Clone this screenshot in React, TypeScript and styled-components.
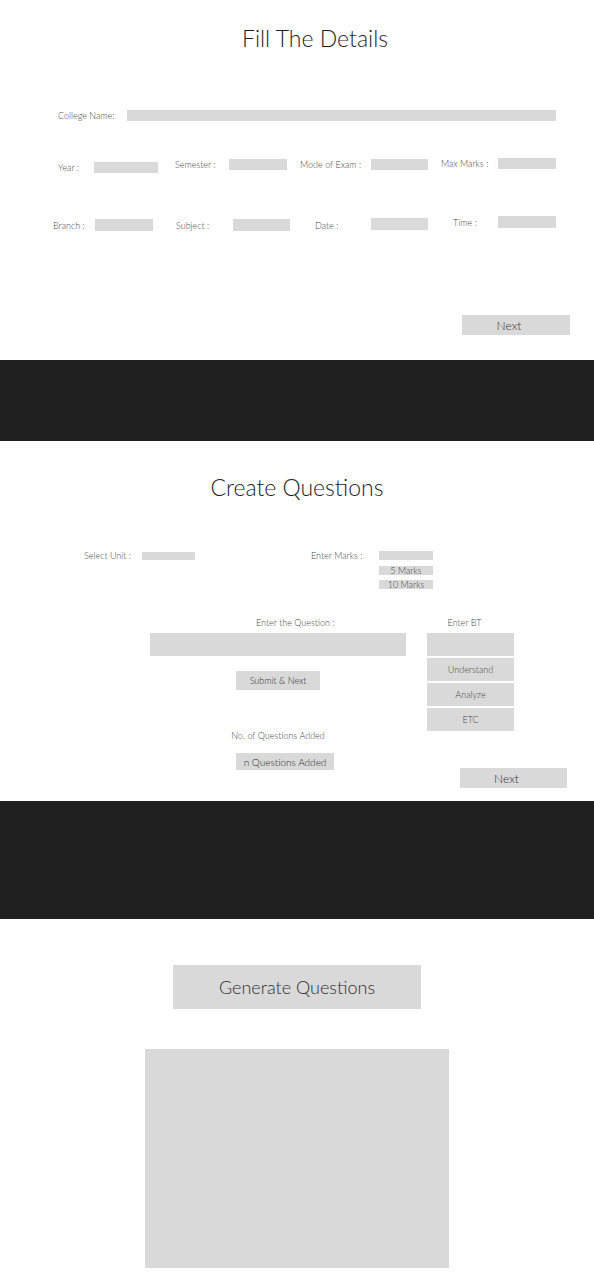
import styled, { createGlobalStyle } from "styled-components"

const Global = createGlobalStyle`
    body {
        margin: 0;
        background: #ffffff;
        font-family: Lato, "Open Sans", sans-serif;
        font-weight: 300;
        color: #444;
    }
`

const Page = styled.div`
    width: 594px;
    display: flex;
    flex-direction: column;
`

const Section = styled.section<{ $h: number; $pt: number }>`
    height: ${p => p.$h}px;
    padding-top: ${p => p.$pt}px;
    box-sizing: border-box;
    display: flex;
    flex-direction: column;
`

const Band = styled.div<{ $h: number }>`
    height: ${p => p.$h}px;
    background: #1f1f1f;
`

const Title = styled.h1<{ $shift?: number }>`
    margin: 0;
    font-size: 23px;
    line-height: 26px;
    font-weight: 300;
    color: #1e1e1e;
    text-align: center;
    padding-left: ${p => p.$shift ?? 0}px;
`

const Row = styled.div<{ $mt: number; $pl: number; $cols?: string }>`
    margin-top: ${p => p.$mt}px;
    padding-left: ${p => p.$pl}px;
    display: grid;
    grid-template-columns: ${p => p.$cols ?? "auto"};
    align-items: start;
`

const Field = styled.div<{ $lw: number; $dy?: number }>`
    display: grid;
    grid-template-columns: ${p => p.$lw}px auto;
    align-items: center;
    margin-top: ${p => p.$dy ?? 0}px;
`

const Label = styled.span<{ $ly?: number }>`
    font-size: 9px;
    line-height: 11px;
    color: #4a4a4a;
    white-space: nowrap;
    margin-top: ${p => (p.$ly ?? 0) * 2}px;
`

const Box = styled.div<{ $w: number; $h: number }>`
    width: ${p => p.$w}px;
    height: ${p => p.$h}px;
    background: #d9d9d9;
    font-size: 9px;
    line-height: ${p => p.$h}px;
    text-align: center;
    color: #4a4a4a;
    white-space: nowrap;
    overflow: hidden;
`

const Button = styled.div<{ $w: number; $h: number; $size: number; $pr?: number }>`
    width: ${p => p.$w}px;
    height: ${p => p.$h}px;
    box-sizing: border-box;
    padding-right: ${p => p.$pr ?? 0}px;
    background: #d9d9d9;
    display: flex;
    align-items: center;
    justify-content: center;
    font-size: ${p => p.$size}px;
    color: #2e2e2e;
    white-space: nowrap;
`

const RightBar = styled.div<{ $mt: number; $pr: number }>`
    margin-top: ${p => p.$mt}px;
    padding-right: ${p => p.$pr}px;
    display: flex;
    justify-content: flex-end;
`

const TopRow = styled.div`
    margin-top: 50px;
    padding-left: 84px;
    display: flex;
    gap: 116px;
    align-items: flex-start;
`

const MarksGroup = styled.div`
    display: flex;
    margin-top: 1px;
`

const MarksLabel = styled(Label)`
    width: 68px;
    line-height: 9px;
`

const Stack = styled.div<{ $gap: number; $mt?: number }>`
    display: flex;
    flex-direction: column;
    gap: ${p => p.$gap}px;
    margin-top: ${p => p.$mt ?? 0}px;
`

const Main = styled.div`
    margin-top: 28px;
    padding-left: 150px;
    display: grid;
    grid-template-columns: 256px 87px;
    column-gap: 21px;
    align-items: start;
`

const Column = styled.div`
    display: flex;
    flex-direction: column;
`

const ColLabel = styled(Label)<{ $ml?: number; $pr?: number; $center?: boolean }>`
    margin-left: ${p => p.$ml ?? 0}px;
    padding-right: ${p => p.$pr ?? 0}px;
    text-align: ${p => (p.$center ? "center" : "left")};
`

const QuestionBox = styled(Box)`
    margin-top: 5px;
`

const Centered = styled.div<{ $mt: number }>`
    margin-top: ${p => p.$mt}px;
    display: flex;
    justify-content: center;
`

const BottomRow = styled.div`
    margin-top: 12px;
    padding-left: 236px;
    padding-right: 27px;
    display: flex;
    align-items: flex-start;
    justify-content: space-between;
`

const NextWrap = styled.div`
    margin-top: 15px;
`

const Output = styled.div`
    width: 304px;
    height: 219px;
    background: #d9d9d9;
`

const row2 = [
    { label: "Year :", lw: 36, bw: 64, dy: 3, ly: 0 },
    { label: "Semester :", lw: 54, bw: 58, dy: 0, ly: 0 },
    { label: "Mode of Exam :", lw: 71, bw: 57, dy: 0, ly: 0 },
    { label: "Max Marks :", lw: 57, bw: 58, dy: -1, ly: 0 },
]

const row3 = [
    { label: "Branch :", lw: 42, bw: 58, dy: 3, ly: 0 },
    { label: "Subject :", lw: 57, bw: 57, dy: 2, ly: 1 },
    { label: "Date :", lw: 56, bw: 57, dy: 0, ly: 2 },
    { label: "Time :", lw: 45, bw: 58, dy: 0, ly: 0 },
]

const btLevels = ["", "Understand", "Analyze", "ETC"]

export default function App() {
    return (
        <Page>
            <Global />
            <Section $h={360} $pt={25}>
                <Title $shift={36}>Fill The Details</Title>
                <Row $mt={59} $pl={58}>
                    <Field $lw={69}>
                        <Label>College Name:</Label>
                        <Box $w={429} $h={11} />
                    </Field>
                </Row>
                <Row $mt={38} $pl={58} $cols="117px 125px 141px auto">
                    {row2.map(f => (
                        <Field key={f.label} $lw={f.lw} $dy={f.dy}>
                            <Label $ly={f.ly}>{f.label}</Label>
                            <Box $w={f.bw} $h={11} />
                        </Field>
                    ))}
                </Row>
                <Row $mt={43} $pl={53} $cols="123px 139px 138px auto">
                    {row3.map(f => (
                        <Field key={f.label} $lw={f.lw} $dy={f.dy}>
                            <Label $ly={f.ly}>{f.label}</Label>
                            <Box $w={f.bw} $h={12} />
                        </Field>
                    ))}
                </Row>
                <RightBar $mt={84} $pr={24}>
                    <Button $w={108} $h={20} $size={12} $pr={14}>Next</Button>
                </RightBar>
            </Section>

            <Band $h={81} />

            <Section $h={360} $pt={33}>
                <Title>Create Questions</Title>
                <TopRow>
                    <Field $lw={58}>
                        <Label>Select Unit :</Label>
                        <Box $w={53} $h={8} />
                    </Field>
                    <MarksGroup>
                        <MarksLabel>Enter Marks :</MarksLabel>
                        <Stack $gap={5.5}>
                            <Box $w={54} $h={9} />
                            <Box $w={54} $h={9}>5 Marks</Box>
                            <Box $w={54} $h={9}>10 Marks</Box>
                        </Stack>
                    </MarksGroup>
                </TopRow>
                <Main>
                    <Column>
                        <ColLabel $ml={106}>Enter the Question :</ColLabel>
                        <QuestionBox $w={256} $h={23} />
                        <Centered $mt={15}>
                            <Button $w={84} $h={19} $size={9}>Submit &amp; Next</Button>
                        </Centered>
                        <Centered $mt={40}>
                            <Label>No. of Questions Added</Label>
                        </Centered>
                    </Column>
                    <Column>
                        <ColLabel $center $pr={12}>Enter BT</ColLabel>
                        <Stack $gap={2} $mt={5}>
                            {btLevels.map((level, i) => (
                                <Box key={i} $w={87} $h={23}>{level}</Box>
                            ))}
                        </Stack>
                    </Column>
                </Main>
                <BottomRow>
                    <Button $w={98} $h={17} $size={10}>n Questions Added</Button>
                    <NextWrap>
                        <Button $w={107} $h={20} $size={12} $pr={14}>Next</Button>
                    </NextWrap>
                </BottomRow>
            </Section>

            <Band $h={118} />

            <Section $h={361} $pt={46}>
                <Centered $mt={0}>
                    <Button $w={248} $h={44} $size={18}>Generate Questions</Button>
                </Centered>
                <Centered $mt={40}>
                    <Output />
                </Centered>
            </Section>
        </Page>
    )
}
